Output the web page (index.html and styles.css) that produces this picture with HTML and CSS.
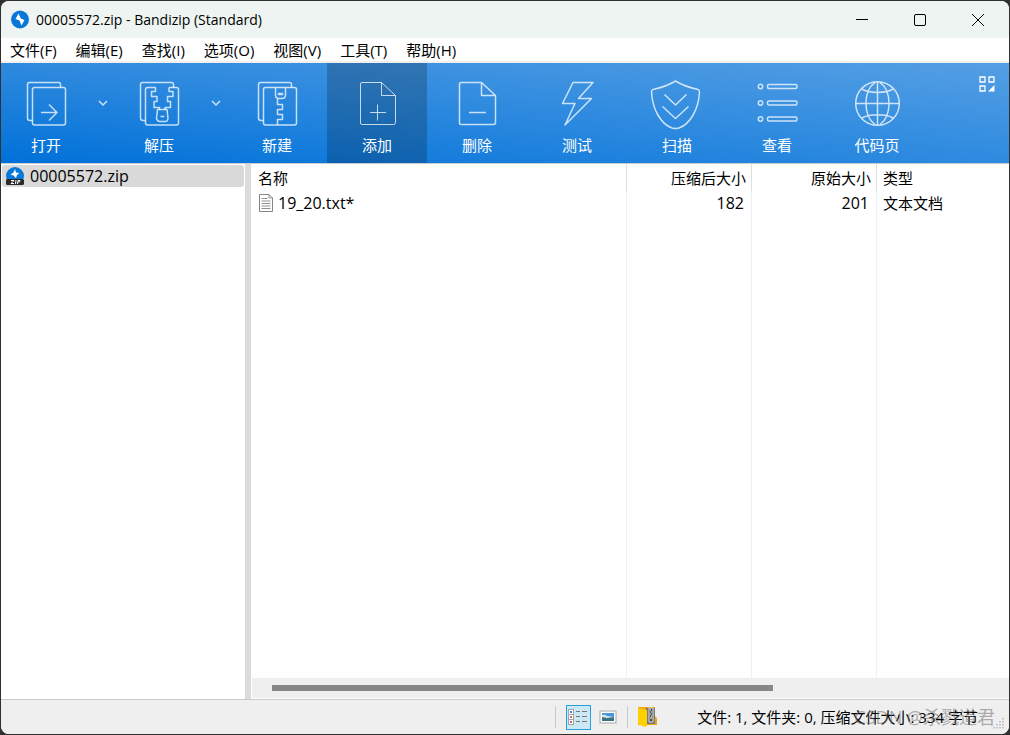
FILE: index.html
```html
<!DOCTYPE html>
<html lang="zh-CN">
<head>
<meta charset="utf-8">
<title>00005572.zip - Bandizip (Standard)</title>
<link rel="stylesheet" href="styles.css">
</head>
<body>
<div class="window">
  <header class="titlebar">
    <svg class="app-icon" width="20" height="20" viewBox="0 0 20 20"><circle cx="10" cy="9.500" r="9" fill="#0878d8"/><path d="M8.500 3.500L5.500 9L9.500 10.500L11.500 15.500L14.500 10L10.800 8.500Z" fill="#fff"/></svg>
    <h1 class="title">00005572.zip - Bandizip (Standard)</h1>
    <div class="caption-buttons">
      <button class="caption" aria-label="最小化"><svg width="14" height="14" viewBox="0 0 14 14"><path d="M1 6.5H13"/></svg></button>
      <button class="caption" aria-label="最大化"><svg width="14" height="14" viewBox="0 0 14 14"><rect x="1.5" y="1.5" width="11" height="11" rx="1.5"/></svg></button>
      <button class="caption" aria-label="关闭"><svg width="14" height="14" viewBox="0 0 14 14"><path d="M1 1L13 13M13 1L1 13"/></svg></button>
    </div>
  </header>
  <nav class="menubar">
    <button>文件(F)</button><button>编辑(E)</button><button>查找(I)</button><button>选项(O)</button><button>视图(V)</button><button>工具(T)</button><button>帮助(H)</button>
  </nav>
  <div class="toolbar">
    <button class="tool split"><svg class="tool-icon" viewBox="0 0 50 50"><path d="M11.500 41.500H9Q6.500 41.500 6.500 39V5.500Q6.500 3.500 8.500 3.500H37.500Q39.500 3.500 39.500 5.500V8.500"/><rect x="11.500" y="8.500" width="33" height="37.500" rx="2"/><path d="M20 33.500H36M28 25.500L36 33.500L28 41.500"/></svg><span>打开</span></button>
    <button class="drop" aria-label="打开选项"><svg width="10" height="8" viewBox="0 0 10 8"><path d="M1 2L5 6L9 2"/></svg></button>
    <button class="tool split"><svg class="tool-icon" viewBox="0 0 50 50"><path d="M11.500 41.500H9Q6.500 41.500 6.500 39V5.500Q6.500 3.500 8.500 3.500H37.500Q39.500 3.500 39.500 5.500V8.500"/><path d="M21.500 8.500H13.500Q11.500 8.500 11.500 10.500V44Q11.500 46 13.500 46H42.500Q44.500 46 44.500 44V10.500Q44.500 8.500 42.500 8.500H35"/><path d="M21.500 8.500V12.500H17.500V17.500H23V22.500H20V28.500H25.500V31M35 8.500V12.500H39V17.500H33.500V22.500H36.500V28.500H31V31"/><path d="M23.500 30.500H33L34 39.500Q33.500 42.500 31.500 42.500H25.500Q23.500 42.500 22.500 39.500ZM26.500 37.500H30.500"/></svg><span>解压</span></button>
    <button class="drop" aria-label="解压选项"><svg width="10" height="8" viewBox="0 0 10 8"><path d="M1 2L5 6L9 2"/></svg></button>
    <button class="tool"><svg class="tool-icon" viewBox="0 0 50 50"><path d="M11.500 41.500H9Q6.500 41.500 6.500 39V5.500Q6.500 3.500 8.500 3.500H37.500Q39.500 3.500 39.500 5.500V8.500"/><rect x="11.500" y="8.500" width="33" height="37.500" rx="2"/><path d="M23.500 8.500V16Q23.500 19.500 27 19.500H30Q33.500 19.500 33.500 16V8.500M26.500 14.500H30.500V15.500H26.500ZM25.500 20V25.500H30.500V30.500H25.500V35.500H30.500V40.500H25.500V46"/></svg><span>新建</span></button>
    <button class="tool active"><svg class="tool-icon" viewBox="0 0 50 50"><path d="M29.500 3.500H10Q8.500 3.500 8.500 5V44Q8.500 45.500 10 45.500H41.500Q43.500 45.500 43.500 43.500V16.500L29.500 3.500V16.500H43.500"/><path d="M18 33.500H34M25.500 25.500V41.500"/></svg><span>添加</span></button>
    <button class="tool"><svg class="tool-icon" viewBox="0 0 50 50"><path d="M29.500 3.500H9.500Q7.500 3.500 7.500 5V44Q7.500 45.500 9.500 45.500H41.500Q43.500 45.500 43.500 43.500V16.500L29.500 3.500V16.500H43.500"/><path d="M17 33.500H34"/></svg><span>删除</span></button>
    <button class="tool"><svg class="tool-icon" viewBox="0 0 50 50"><path d="M21 3.500H41L26.500 19.500H39.500L13 46L23 24.500H10.500Z"/></svg><span>测试</span></button>
    <button class="tool"><svg class="tool-icon" viewBox="0 0 50 50"><path d="M23.500 2C17 6 8 9 1 10.500Q-.5 11 -.5 13C.5 31 9 45 20 49Q23.500 50 27 49C38 45 46.500 31 47.500 13Q47.500 11 46 10.500C39 9 30 6 23.500 2Z"/><path d="M12.500 15.500L23.500 26L34.500 15.500M10.500 27.500L23.500 39.500L36.500 27.500"/></svg><span>扫描</span></button>
    <button class="tool"><svg class="tool-icon" viewBox="0 0 50 50"><circle cx="8.500" cy="7.500" r="2.200"/><circle cx="8.500" cy="24" r="2.200"/><circle cx="8.500" cy="40" r="2.200"/><rect x="15.500" y="5.500" width="29.500" height="4" rx="1.500"/><rect x="15.500" y="22" width="29.500" height="4" rx="1.500"/><rect x="15.500" y="38" width="29.500" height="4" rx="1.500"/></svg><span>查看</span></button>
    <button class="tool"><svg class="tool-icon" viewBox="0 0 50 50"><circle cx="25.500" cy="24.500" r="21.800"/><path d="M25.500 3V46M4 24.500H47M23 3.500C11 12 11 37 23 45.500M28 3.500C40 12 40 37 28 45.500M10 10C17 14.500 34 14.500 41 10M10 39C17 34.500 34 34.500 41 39"/></svg><span>代码页</span></button>
    <button class="layout-button" aria-label="自定义工具栏"><svg width="16" height="16" viewBox="0 0 16 16"><path d="M1 1H6V6H1ZM10 1H15V6H10ZM1 10H6V15H1Z" fill="none" stroke="#fff" stroke-width="1.300"/><path d="M15.500 9V15.500H9Z" fill="#fff"/></svg></button>
  </div>
  <main class="workspace">
    <aside class="tree">
      <button class="tree-item">
        <svg width="20" height="20" viewBox="0 0 20 20"><circle cx="10" cy="10" r="9" fill="#0878d8"/><path d="M10 3L8.500 6.500L5.500 8.500L8.500 9.500L11 12L12 9L14.500 7L11 6.500Z" fill="#fff"/><rect x="1" y="13" width="18" height="6" rx="1.500" fill="#292929"/><path d="M6 14.500H9L6 17.500H9M11 14L10.500 18M12.500 18L13 14.500H15Q15.500 16 13 16.200" fill="none" stroke="#fff"/></svg>
        <span>00005572.zip</span>
      </button>
    </aside>
    <div class="splitter"></div>
    <section class="files">
      <div class="table-area">
        <table>
          <colgroup><col class="col-name"><col class="col-size"><col class="col-size"><col></colgroup>
          <thead><tr><th>名称</th><th class="num">压缩后大小</th><th class="num">原始大小</th><th>类型</th></tr></thead>
          <tbody>
            <tr class="entry"><td class="latin"><div class="file"><svg width="16" height="20" viewBox="0 0 16 20"><path d="M1.500 1.500H11L14.500 5V18.500H1.500Z" fill="#fff" stroke="#858585"/><path d="M11 1.500V5H14.500M3.500 5.500H9.500M3.500 8H12.500M3.500 10.500H12.500M3.500 13H12.500M3.500 15.500H12.500" fill="none" stroke="#929292"/></svg><span>19_20.txt*</span></div></td><td class="num latin">182</td><td class="num latin">201</td><td>文本文档</td></tr>
            <tr class="filler"><td></td><td></td><td></td><td></td></tr>
          </tbody>
        </table>
      </div>
      <div class="scrollbar"><div class="thumb"></div></div>
    </section>
  </main>
  <footer class="statusbar">
    <div class="view-group">
      <button class="view selected" aria-label="详细信息"><svg width="21" height="18" viewBox="0 0 21 18"><g fill="#fff" stroke="#a5a5a5"><rect x=".5" y="1.500" width="5" height="5"/><rect x=".5" y="6.500" width="5" height="5"/><rect x=".5" y="11.500" width="5" height="5"/></g><path d="M8 3.500H12M14 3.500H19M8 8.500H12M14 8.500H19M8 13.500H12M14 13.500H19" stroke="#777"/><path d="M2 4H4" stroke="#3686c8" stroke-width="2"/><path d="M2 9H4M2 14H4" stroke="#d66" stroke-width="2"/></svg></button>
      <button class="view" aria-label="缩略图"><svg width="18" height="14" viewBox="0 0 18 14"><rect x="1" y="1" width="16" height="12" fill="#fff" stroke="#aaa"/><rect x="3" y="3" width="12" height="8" fill="#4c93dc"/><path d="M3 5Q6 4 8 6L15 7V9H3Z" fill="#d5e9f4"/><path d="M3 7L8 8L15 7V11H3Z" fill="#397780"/></svg></button>
    </div>
    <div class="archive-group"><svg width="20" height="22" viewBox="0 0 20 22"><path d="M1 2Q1 1 2 1H18V10L20 12V19H1Z" fill="#eba710"/><rect x="9" y="2" width="9" height="16" fill="#77797d"/><path d="M12 2V16H16V2Z" fill="#555" stroke="#ddd"/><path d="M13 4h1M14 6h1M13 8h1M14 10h1M13 12h2" stroke="#fff"/><path d="M1 2L10 4V20L8 21L1 18Z" fill="#ffd000"/></svg></div>
    <p class="summary">文件: 1, 文件夹: 0, 压缩文件大小: 334 字节</p>
    <svg class="grip" width="12" height="12" viewBox="0 0 12 12"><path d="M10 0V12M7 3V12M4 6V12M1 9V12" stroke="#b5b5b5" stroke-width="1.500" stroke-dasharray="1.500 1.500"/></svg>
    <span class="watermark">CSDN @杀戮道君</span>
  </footer>
</div>
</body>
</html>
```

FILE: styles.css
```css
* { box-sizing: border-box; }
body {
  margin: 0;
  height: 100vh;
  padding: 1px;
  background: #303030;
  color: #000;
  font: 15px/20px "Open Sans", "Noto Sans", "Noto Sans CJK SC", sans-serif;
}
button {
  margin: 0;
  padding: 0;
  border: 0;
  background: none;
  color: inherit;
  font: inherit;
}
svg { display: block; flex: none; }
.window {
  display: flex;
  flex-direction: column;
  height: 100%;
  overflow: hidden;
  border-radius: 8px;
  background: #fff;
}
.titlebar {
  display: flex;
  align-items: center;
  flex: none;
  height: 37px;
  padding: 0 2px 0 9px;
  background: #eef4f1;
}
.title {
  margin: 0 auto 0 6px;
  font-size: 14px;
  font-weight: 400;
}
.caption-buttons { display: flex; }
.caption {
  display: flex;
  align-items: center;
  justify-content: center;
  width: 58px;
  height: 36px;
}
.caption svg { fill: none; stroke: #000; stroke-width: 1; }
.menubar {
  display: flex;
  flex: none;
  gap: 19px;
  height: 25px;
  padding: 0 9px;
  border-bottom: 2px solid #f0f0f0;
}
.toolbar {
  display: flex;
  flex: none;
  height: 101px;
  border-bottom: 1px solid #c9cdd0;
  background:
    linear-gradient(90deg, rgba(255, 255, 255, 0), rgba(255, 255, 255, .18)),
    linear-gradient(#2f8ade, #0071d9);
  color: #fff;
}
.tool {
  display: flex;
  flex-direction: column;
  align-items: center;
  width: 100px;
  padding-top: 16px;
  gap: 6px;
}
.split { width: 90px; }
.active { background: rgba(0, 0, 0, .2); }
.tool-icon {
  width: 50px;
  height: 50px;
  overflow: visible;
  fill: none;
  stroke: rgba(255, 255, 255, .75);
  stroke-width: 1.5;
  stroke-linejoin: round;
}
.active .tool-icon { stroke-width: 1; }
.drop {
  display: flex;
  justify-content: center;
  width: 23px;
  padding-top: 36px;
}
.drop svg { fill: none; stroke: #cce3f8; stroke-width: 1.5; }
.layout-button {
  align-self: flex-start;
  margin-left: auto;
  padding: 13px 14px;
}
.workspace { display: flex; flex: 1; min-height: 0; }
.tree { flex: none; width: 244px; padding: 1px; }
.tree-item {
  display: flex;
  align-items: center;
  gap: 5px;
  width: 100%;
  height: 22px;
  padding-left: 3px;
  border-radius: 3px;
  background: #d9d9d9;
  font-size: 16px;
}
.splitter { flex: none; width: 6px; background: #dcdcdc; }
.files { display: flex; flex: 1; flex-direction: column; min-width: 0; padding-left: 1px; }
.table-area { display: grid; flex: 1; }
table {
  width: 100%;
  height: 100%;
  table-layout: fixed;
  border-collapse: separate;
  border-spacing: 0;
}
.col-name { width: 375px; }
.col-size { width: 125px; }
th, td {
  padding: 0 7px 0 6px;
  border-right: 1px solid #e9f2fb;
  font-weight: 400;
  text-align: left;
  white-space: nowrap;
}
th { height: 27px; padding-right: 5px; border-right-color: #dedede; }
th:last-child, td:last-child { border-right: 0; }
.entry { height: 24px; }
.num { text-align: right; }
.latin { font-size: 16px; }
.file { display: flex; align-items: center; gap: 4px; }
.scrollbar {
  flex: none;
  height: 21px;
  padding: 7px 0 7px 20px;
  border-bottom: 1px solid #fff;
  background: #efefef;
}
.thumb { width: 68%; height: 6px; background: #878787; }
.statusbar {
  position: relative;
  display: flex;
  align-items: center;
  justify-content: flex-end;
  flex: none;
  height: 35px;
  border-top: 1px solid #c9c9c9;
  background: #efefef;
}
.view-group, .archive-group {
  display: flex;
  align-items: center;
  height: 22px;
  border-left: 1px solid #cbcbcb;
}
.view-group { gap: 8px; padding: 0 10px; }
.view {
  display: flex;
  align-items: center;
  justify-content: center;
}
.selected {
  width: 25px;
  height: 25px;
  border: 1px solid #26a0da;
  background: #cce8f5;
}
.archive-group { padding: 0 40px 0 9px; }
.summary { margin: 0; padding-right: 15px; white-space: nowrap; }
.grip { align-self: flex-end; margin: 0 4px 4px 0; }
.watermark {
  position: absolute;
  right: 14px;
  bottom: 7px;
  color: rgba(110, 110, 110, .55);
  font-size: 18px;
}
```
